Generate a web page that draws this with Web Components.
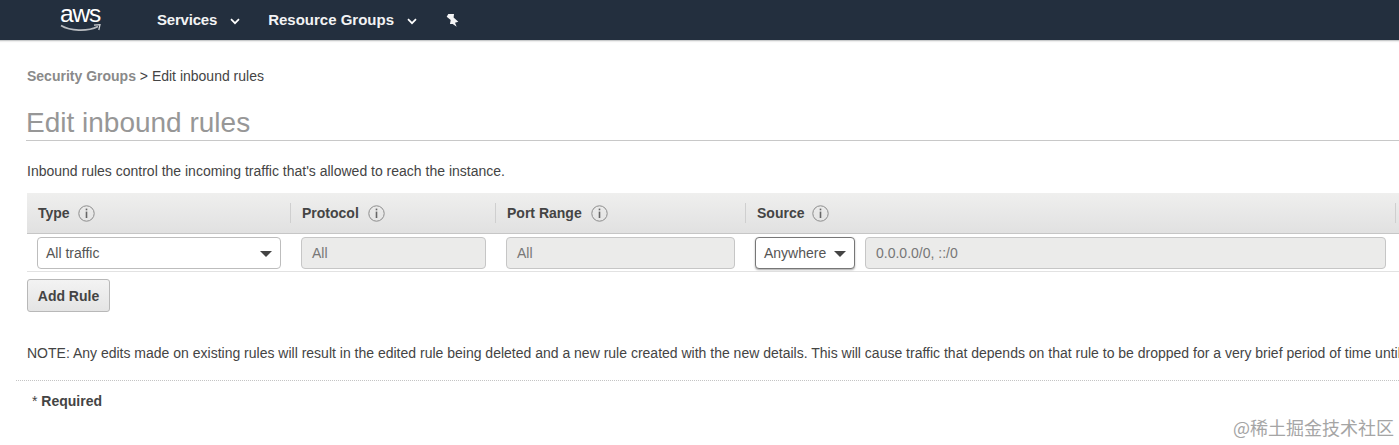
<!DOCTYPE html>
<html><head><meta charset="utf-8"><title>Edit inbound rules</title>
<style>
html,body{margin:0;padding:0;background:#fff;overflow:hidden;width:1399px;height:445px}
body{font-family:"Liberation Sans",Arial,sans-serif;color:#444;position:relative}
</style></head><body>
<aws-nav></aws-nav>
<aws-page>
  <aws-crumbs></aws-crumbs>
  <aws-title>Edit inbound rules</aws-title>
  <aws-desc>Inbound rules control the incoming traffic that's allowed to reach the instance.</aws-desc>
  <rules-table></rules-table>
  <aws-button>Add Rule</aws-button>
  <aws-note>NOTE: Any edits made on existing rules will result in the edited rule being deleted and a new rule created with the new details. This will cause traffic that depends on that rule to be dropped for a very brief period of time until the new rule can be created.</aws-note>
  <aws-footer></aws-footer>
</aws-page>
<water-mark>@稀土掘金技术社区</water-mark>
<script>
function def(name, css, html){
  customElements.define(name, class extends HTMLElement{
    constructor(){super();this.attachShadow({mode:'open'}).innerHTML='<style>'+css+'</style>'+html;}
  });
}
const chev='<svg width="10" height="7" viewBox="0 0 10 7"><path d="M1 1.2 5 5.2 9 1.2" fill="none" stroke="#fff" stroke-width="1.7"/></svg>';
def('aws-nav',`
:host{display:flex;align-items:center;height:40px;background:#232f3e;border-bottom:1px solid #c9cbcc;box-shadow:0 1px 1px #eee;color:#f4f5f6;box-sizing:content-box}
.logo{position:relative;display:block;width:42px;height:40px;margin-left:60px;flex:none}
.aws{position:absolute;left:0;top:0;font:400 24.5px/28px "Liberation Sans",sans-serif;letter-spacing:-1.1px;color:#fff}
.smile{position:absolute;left:0;top:22px}
.item{display:flex;align-items:center;font:700 15px/20px "Liberation Sans",sans-serif;color:#f2f3f4}
.item svg{display:block;margin-left:13px;margin-top:2px}
.s{margin-left:55px;letter-spacing:-.2px}.r{margin-left:28px}
.pin{margin-left:29px;display:block}
`,`<span class="logo"><span class="aws">aws</span>
<svg class="smile" width="42" height="12" viewBox="0 0 42 12"><path d="M1 3.5C10 9 27 10 38 4.5" fill="none" stroke="#b9bcc0" stroke-width="1.6"/><path d="M34 3.2 40 2.6 38.8 8" fill="none" stroke="#d6d8da" stroke-width="1.2"/></svg></span>
<span class="item s">Services${chev}</span>
<span class="item r">Resource Groups${chev}</span>
<svg class="pin" width="14" height="15" viewBox="0 0 14 15"><path d="M2.3 1 8 1 7.6 4.5 12.3 8.7 9 9.7 10.7 13.7 6.7 11 4 11 4.7 7 .7 3.7Z" fill="#f4f5f6"/></svg>`);
def('aws-page',`:host{display:block;padding-left:16px}`,`<slot></slot>`);
def('aws-crumbs',`
:host{display:block;margin:27px 0 0 11px;font-size:14px;line-height:17px;color:#444;white-space:nowrap}
b{color:#8a8a8a;font-weight:700}
`,`<b>Security Groups</b> &gt; Edit inbound rules`);
def('aws-title',`
:host{display:block;margin:21px 0 0 10px;height:34px;border-bottom:1px solid #c8c8c8;font-size:28px;line-height:33px;color:#979797}
`,`<slot></slot>`);
def('aws-desc',`:host{display:block;margin:22px 0 0 11px;font-size:14px;line-height:17px;color:#444;white-space:nowrap}`,`<slot></slot>`);
const info='<svg width="17" height="17" viewBox="0 0 17 17"><circle cx="8.5" cy="8.5" r="7.7" fill="none" stroke="#8c8c8c"/><rect x="7.7" y="3.6" width="1.6" height="1.7" fill="#666"/><rect x="7.7" y="6.6" width="1.6" height="6.4" fill="#666"/></svg>';
def('rule-head',`
:host{display:flex;align-items:center;gap:8px;height:20px;padding-left:11px;border-right:1px solid #cfcfcf;font-size:14px;font-weight:700;color:#444;box-sizing:border-box;white-space:nowrap}
:host(.w){gap:9px}
svg{display:block}
`,`<slot></slot>${info}`);
def('rule-field',`
:host{display:flex;align-items:center;box-sizing:border-box;height:32px;padding:0 9px 0 10px;border:1px solid #c6c6c6;border-radius:4px;background:#ebebea;color:#777;font-size:14px;white-space:nowrap}
`,`<slot></slot>`);
def('rule-select',`
:host{display:flex;align-items:center;justify-content:space-between;box-sizing:border-box;height:32px;padding:0 8px;border:1px solid #bdbdbd;border-radius:4px;background:#fff;color:#555;font-size:14px;white-space:nowrap}
:host(.dark){border-color:#777;box-shadow:0 1px 2px #aaa}
i{display:block;width:0;height:0;border:6px solid transparent;border-top:6.5px solid #444;border-bottom:0;margin-top:1px}
`,`<slot></slot><i></i>`);
def('rules-table',`
:host{display:block;margin:13px 0 0 11px}
.head{display:grid;grid-template-columns:264px 205px 250px 650px;align-items:center;height:41px;background:linear-gradient(#efefee,#e1e1e1);box-sizing:border-box;border-bottom:1px solid #c6c6c6}
.row{display:flex;align-items:flex-start;height:38px;box-sizing:border-box;padding:3px 0 0 10px;border-bottom:1px solid #e2e2e2}
.type{width:244px;margin-right:20px}.proto{width:185px;margin-right:20px}.port{width:229px;margin-right:20px}.any{width:100px;margin-right:10px}.src{width:521px}
`,`<div class="head"><rule-head>Type</rule-head><rule-head class="w">Protocol</rule-head><rule-head class="w">Port Range</rule-head><rule-head>Source</rule-head></div>
<div class="row"><rule-select class="type">All traffic</rule-select><rule-field class="proto">All</rule-field><rule-field class="port">All</rule-field><rule-select class="any dark">Anywhere</rule-select><rule-field class="src">0.0.0.0/0, ::/0</rule-field></div>`);
def('aws-button',`
:host{display:flex;align-items:center;justify-content:center;box-sizing:border-box;width:83px;height:33px;margin:7px 0 0 11px;border:1px solid #b8b8b8;border-radius:3px;background:linear-gradient(#f3f3f3,#e4e4e4);font-size:14px;font-weight:700;color:#444;white-space:nowrap}
`,`<slot></slot>`);
def('aws-note',`:host{display:block;margin:33px 0 0 11px;font-size:14px;line-height:17px;color:#444;white-space:nowrap}`,`<slot></slot>`);
def('aws-footer',`
:host{display:block;margin-top:18px;border-top:1px dotted #c4c4c4;padding:12px 0 0 16px;font-size:14px;line-height:17px;color:#444;white-space:nowrap}
b{font-weight:700}
`,`* <b>Required</b>`);
def('water-mark',`:host{position:absolute;left:1233px;top:415px;font:18px/24px "Noto Sans CJK SC",sans-serif;color:#a5a5a5;white-space:nowrap}`,`<slot></slot>`);
</script>
</body></html>
